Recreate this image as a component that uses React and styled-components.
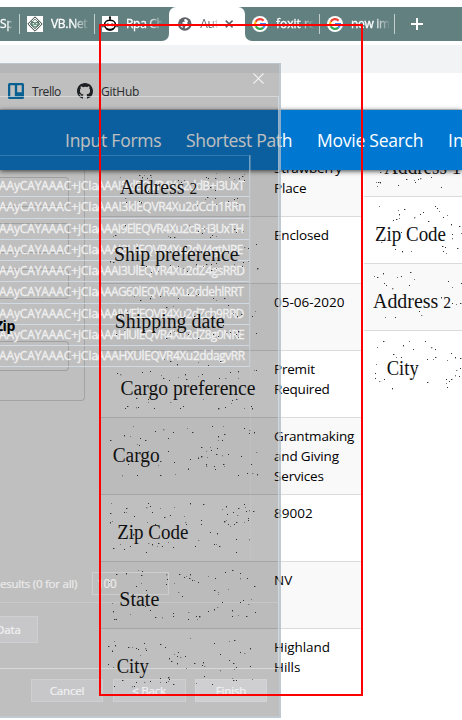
import React from 'react';
import styled, { createGlobalStyle } from 'styled-components';

const Global = createGlobalStyle`
  * { box-sizing: border-box; }
  body { margin: 0; background: #fff; font-family: "Open Sans", "Noto Sans", sans-serif; color: #000; }
`;

const Screen = styled.div`
  position: relative; width: 462px; height: 720px; overflow: hidden;
  display: flex; flex-direction: column; padding-top: 7px; background: #fff;
`;
const TabStrip = styled.div`display: flex; height: 34px; flex: none; overflow: hidden;`;
const TabGroup = styled.div`
  display: flex; background: #638080; width: ${p => p.$w}px; flex: none; overflow: hidden;
  border-radius: ${p => (p.$side === 'left' ? '0 0 7px 0' : '0 0 0 7px')};
`;
const Tab = styled.div`
  display: flex; align-items: center; flex: none; width: ${p => p.$w}px; height: 34px;
  padding-left: ${p => p.$pad ?? 7}px; gap: 8px; position: relative;
  &::after { content: ''; display: ${p => (p.$last ? 'none' : 'block')}; position: absolute; right: 0; top: 7px; width: 1px; height: 20px; background: #c3cece; }
`;
const TabText = styled.span`
  font-size: 12px; line-height: 20px; width: ${p => p.$w}px; overflow: hidden; white-space: nowrap;
  letter-spacing: ${p => p.$ls ?? -0.3}px; color: ${p => (p.$dark ? '#5f6368' : '#fff')};
  -webkit-text-stroke: ${p => (p.$dark ? 0 : 0.3)}px currentColor;
  mask-image: linear-gradient(90deg, #000 60%, transparent 105%);
`;
const ActiveWrap = styled.div`width: 76px; flex: none; background: linear-gradient(#638080 50%, #fff 50%);`;
const ActiveTab = styled.div`
  display: flex; align-items: center; height: 34px; padding-left: 9px; background: #fff; border-radius: 7px 7px 0 0;
`;
const PlusWrap = styled.div`display: flex; align-items: center; padding-left: 15px;`;
const Toolbar = styled.div`height: 28px; margin-top: 4px; background: #f1f3f4; flex: none;`;
const Bookmarks = styled.div`
  display: flex; align-items: center; height: 37px; flex: none; padding-left: 8px; border-bottom: 1px solid #d5dade;
`;
const Bookmark = styled.div`display: flex; align-items: center; gap: 8px; width: 69px; font-size: 12px; color: #2c2f33; letter-spacing: ${p => p.$ls}px;`;
const Nav = styled.nav`
  position: relative; z-index: 1; display: flex; gap: 25px; height: 60px; flex: none; padding-left: 65px;
  background: #0078d2; color: #fff; box-shadow: 0 1px 5px rgba(0,0,0,.75); align-items: center; overflow: visible;
`;
const NavLink = styled.span`font-size: 17.5px; line-height: 24px; white-space: nowrap; width: ${p => p.$w}px; flex: none; letter-spacing: ${p => p.$ls}px;`;
const Content = styled.main`display: flex; align-items: flex-start; height: 550px; overflow: hidden;`;
const FormPane = styled.section`width: 101px; height: 550px; flex: none;`;
const Card = styled.div`width: 85px; height: 231px; border: 1px solid #d9d9d9; border-width: 0 1px 1px 0; border-radius: 0 0 4px 0; padding-top: 7px;`;
const Field = styled.div`
  width: 69px; height: 30px; margin-bottom: ${p => p.$gap}px; border: 1px solid #d3d3d3; border-left: 0; border-radius: 0 4px 4px 0;
`;
const FieldLabel = styled.div`position: relative; z-index: 3; height: 20px; font-size: 14px; line-height: 19px; font-weight: 700; margin: 0 0 5px -5px; letter-spacing: -.5px;`;
const Table = styled.div`flex: none; width: ${p => p.$w}px; margin-top: ${p => p.$shift}px;`;
const Row = styled.div`
  display: flex; height: ${p => p.$h}px; border-top: 1px solid #d9dbdd; background: ${p => (p.$odd ? '#f9f9f9' : '#fff')};
`;
const Picture = styled.svg`flex: none; display: block; position: relative; z-index: 3; margin-top: -1px; width: ${p => p.$w}px; height: 67px;`;
const Value = styled.div`
  padding: 8px 0 0 0; font-size: 13.5px; line-height: 20px; white-space: pre; letter-spacing: ${p => p.$ls}px;
`;

const Dialog = styled.aside`
  position: absolute; z-index: 2; left: 0; top: 63px; width: 281px; height: 655px; overflow: hidden;
  background: rgba(37,37,37,.294); border: 1px solid rgba(190,205,218,.7); border-width: 1px 2px 2px 0;
  color: #ebebeb; font-size: 11.6px; display: flex; flex-direction: column; white-space: nowrap;
  -webkit-text-stroke: .2px currentColor;
`;
const TitleBar = styled.div`height: 32px; flex: none; display: flex; justify-content: flex-end; padding: 9px 15px 0 0;`;
const Body = styled.div`height: 573px; flex: none; border: 1px solid rgba(226,230,234,.62); border-width: 1px 1px 1px 0; padding-top: 58px;`;
const Grid = styled.div`
  width: 251px; height: 406px; border-right: 1px solid rgba(205,205,205,.3);
`;
const GridRows = styled.div`border-right: 1px solid rgba(205,220,233,.55); border-top: 1px solid rgba(205,220,233,.2);`;
const GridRow = styled.div`
  display: flex; height: 21.25px; line-height: 20px; border-bottom: 1px solid rgba(208,221,233,.9); color: #efefef; font-size: 12px;
  -webkit-text-stroke: .35px currentColor;
  &:first-child { height: 20px; border-color: transparent; }
`;
const Prefix = styled.span`width: 98px; flex: none; letter-spacing: -.12px; margin-left: -1px;`;
const Data = styled.span`width: 149px; letter-spacing: ${p => p.$ls}px;`;
const Limit = styled.div`display: flex; align-items: center; height: 42px; border-bottom: 1px solid rgba(220,220,220,.35); padding-top: 3px;`;
const LimitLabel = styled.span`width: 92px; letter-spacing: -.28px;`;
const LimitBox = styled.span`width: 77px; height: 23px; border: 1px solid rgba(220,220,220,.55); padding-left: 4px; line-height: 21px; font-size: 11.8px; letter-spacing: -.3px;`;
const Button = styled.div`
  width: ${p => p.$w}px; height: ${p => p.$h ?? 23}px; flex: none; background: ${p => (p.$hi ? 'rgba(215,215,218,.65)' : 'rgba(208,208,214,.5)')};
  border: 1px solid rgba(220,220,223,.38); display: flex; align-items: center; justify-content: center; color: #f2f2f2; letter-spacing: -.2px;
`;
const ExtractButton = styled(Button)`margin-top: 13px; justify-content: flex-start; border-left: 0; padding-left: 0; text-indent: -4px;`;
const Footer = styled.div`display: flex; padding: 10px 0 0 31px; gap: 9.5px;`;
const Highlight = styled.div`position: absolute; z-index: 4; left: 99px; top: 24px; width: 264px; height: 672px; border: 2px solid #fe0000;`;

/* Each label image: text, x, baseline, width, then speckle offsets in thirds of a pixel. */
const LEFT = [
  { t: 'Address 2', x: 18.7, y: 44.5, w: 77.5, ox: -3, oy: 19, h: 67, v: 'Strawberry\nPlace', ls: -0.15,
    d: '66,28 125,22 132,28 138,22 148,30 158,22 160,28 240,38 250,44 258,38 326,28 330,30 356,16 353,30 395,28 410,34 425,30 432,24 438,18 440,36 86,104 82,92 124,100 130,102 322,94 328,88 352,90 354,110 352,68 336,58 298,112 390,100 408,94 418,108 417,92 150,70' },
  { t: 'Ship preference', x: 13, y: 44.5, w: 124.5, ox: -3, oy: -48, h: 67, v: 'Enclosed', ls: -0.15,
    d: '46,206 52,202 82,172 210,206 218,208 230,208 274,172 302,190 312,196 320,180 338,208 344,202 356,206 410,184 416,194 436,190 38,280 46,282 182,286 218,292 240,296 256,300 268,310 296,290 316,296 324,290 340,290 354,300 356,286 340,306 410,288 432,294 436,282 440,238 452,242 476,230 450,280 478,300 146,296 180,310 160,312 422,262' },
  { t: 'Shipping date', x: 13.7, y: 44.5, w: 110, ox: -3, oy: -115, h: 67, v: '05-06-2020', ls: 0,
    d: '110,384 128,396 156,390 160,384 188,384 206,418 226,416 240,392 270,380 294,382 300,380 346,390 356,396 380,392 392,412 405,436 418,444 430,440 472,430 464,444 54,500 80,488 140,486 170,490 176,482 204,512 216,496 230,490 270,500 300,510 316,478 346,500 362,506 384,494 398,494 414,498 420,508 422,490 474,496 88,430 376,472 290,446' },
  { t: 'Cargo preference', x: 19.5, y: 44.5, w: 135, ox: -11, oy: 20, h: 67, v: 'Premit\nRequired', ls: -0.2,
    d: '224,-31 242,-26 262,-16 324,-22 356,-14 392,-26 492,0 500,2 82,10 92,12 158,6 182,4 214,16 220,26 238,30 266,22 286,14 290,28 326,18 338,14 388,24 406,24 420,8 444,4 446,24 138,84 176,88 176,96 106,116 112,110 138,112 144,112 194,114 242,96 272,114 280,110 340,88 386,114 406,112 424,100 428,90 440,88 462,114 484,108 486,114' },
  { t: 'Cargo', x: 11.7, y: 44.5, w: 47, ox: -11, oy: -47, h: 77, v: 'Grantmaking\nand Giving\nServices', ls: -0.17,
    d: '130,170 60,212 104,196 122,198 150,206 166,210 142,224 148,226 196,184 220,178 250,188 236,206 292,176 308,188 368,170 400,168 384,198 404,194 386,212 396,210 462,176 478,182 478,190 492,186 360,232 334,232 382,236 348,244 364,240 378,252 398,256 414,252 454,260 500,246 236,244 302,268 326,262 334,260 324,266 352,262 254,276 210,274 294,294 296,298 348,284 350,290 374,290 376,298 402,290 400,282 484,284 96,316 142,316 210,316 256,314 446,316 472,310 486,310 502,314 116,282 206,286' },
  { t: 'Zip Code', x: 16.3, y: 44.5, w: 71, ox: -11, oy: -4, h: 67, v: '89002', ls: 0,
    d: '64,40 60,70 60,96 66,94 102,66 108,56 108,68 134,80 176,40 168,52 180,48 188,68 212,54 224,82 240,76 254,52 302,40 340,42 284,80 334,90 334,104 286,96 288,102 410,48 396,58 444,56 464,42 466,52 470,64 490,64 478,62 412,74 430,68 442,76 474,84 474,92 410,90 404,94 414,102 420,110 432,104 440,96 464,96 362,128 382,130 324,152 316,170 374,162 380,164 388,168 438,148 478,148 440,186 70,174 90,164 102,178 120,170 174,160 186,164 168,186 202,168 206,160 218,170 234,156 250,172 130,132 172,98 196,102' },
  { t: 'State', x: 18.3, y: 44.5, w: 40, ox: -101, oy: -1, h: 67, v: 'NV', ls: 0,
    d: '328,66 348,44 380,40 416,32 426,34 424,46 424,70 408,80 440,92 500,44 502,58 498,72 522,70 538,44 552,52 560,50 570,42 568,54 584,60 594,68 578,62 536,96 548,108 340,154 336,130 342,178 350,178 390,164 450,152 466,172 486,172 520,160 520,170 564,158 566,178 590,170 592,178 598,170 436,140 626,48 646,54 644,92 656,104 626,154 644,148 652,142 668,126 676,38 684,88 698,30 720,40 722,54 742,54 764,78 755,117 722,126 730,122 744,134 698,152 698,168 714,166 740,170 766,156 654,98' },
  { t: 'City', x: 15.7, y: 44.5, w: 32, ox: -101, oy: -68, h: 67, v: 'Highland\nHills', ls: -0.07,
    d: '344,244 326,260 346,256 338,272 336,274 384,262 396,262 408,266 414,268 436,264 432,250 440,270 420,286 480,252 496,262 572,236 508,294 514,304 522,284 534,278 532,288 542,292 556,290 532,310 560,324 582,310 326,312 340,322 344,380 366,360 396,378 404,378 410,366 432,366 452,364 480,356 480,368 504,352 508,358 506,364 500,368 520,374 590,370 606,316 610,308 614,318 638,374 644,250 688,244 702,240 660,284 662,330 688,300 700,310 704,328 710,322 720,278 732,280 752,264 750,318 698,356 700,360 710,362 756,358 612,348' },
];
const RIGHT = [
  { t: 'Address 1', x: 20.3, y: 44.5, w: 77, ox: -133, oy: -19, h: 67,
    d: '436,216 442,218 448,216 438,228 502,226 526,208 550,210 554,218 562,208 568,206 600,202 632,232 444,182 448,186' },
  { t: 'Zip Code', x: 11, y: 44.5, w: 71, ox: -133, oy: -86, h: 67,
    d: '446,288 520,298 506,312 502,300 488,332 496,328 506,324 568,312 576,308 550,322 612,290 620,296 626,304 592,334 638,322 648,316 660,344 686,348 690,370 510,366 664,374 450,397 492,419 514,425 540,423 634,409 644,413 646,431 636,425 680,415 664,385' },
  { t: 'Address 2', x: 9, y: 44.5, w: 78, ox: -133, oy: -28, h: 67,
    d: '430,124 440,126 458,114 498,128 510,124 538,112 550,134 460,144 466,152 484,160 534,150 652,140 664,156 690,144 664,206 676,208 632,188 688,204 462,248 492,246 564,228 572,242' },
  { t: 'City', x: 22.7, y: 44.5, w: 32, ox: -133, oy: -95, h: 67,
    d: '438,336 456,320 516,332 536,318 582,320 486,358 496,368 510,366 548,344 600,336 614,344 590,372 606,372 614,366 662,354 650,376 672,366 688,370 436,388 434,414 434,430 444,438 460,434 485,460 540,430 590,442 646,434 646,444 650,456 660,434 674,420 684,424 688,400 676,406 556,396 654,440' },
];

function LabelImage({ item, width }) {
  const twoAt = item.t.endsWith('2');
  return (
    <Picture $w={width}>
      {item.d.split(' ').map((p, i) => {
        const [x, y] = p.split(',').map(Number);
        return <rect key={i} x={Math.round(x / 3 + item.ox - 0.4)} y={Math.round(y / 3 + item.oy - 0.4)} width={i % 4 === 1 ? 1.4 : 1} height={i % 7 === 2 ? 1.4 : 1} fill={i % 3 === 0 ? '#777' : '#333'} />;
      })}
      <text x={item.x} y={item.y} textLength={item.w} lengthAdjust="spacingAndGlyphs" fontFamily='"Liberation Serif", serif' fontSize="20.5" fill="#111">
        {twoAt ? <>Address <tspan fontSize="16">2</tspan></> : item.t}
      </text>
    </Picture>
  );
}

const PREFIX = 'AAyCAYAAAC+jCIa';
const ROWS = [
  ['AAAI5klEQVR4Xu2ddB+i3UxT', -0.6],
  ['AAAI3klEQVR4Xu2dCch1RRn', -0.42],
  ['AAAI9ElEQVR4Xu2cB+i3UxTH', -0.65],
  ['AAAI8UlEQVR4Xu2dV4gtNRE', -0.55],
  ['AAAI3UlEQVR4Xu2dZ4gsRRD', -0.55],
  ['AAAG60lEQVR4Xu2ddehlRRT', -0.6],
  ['AAAIWElEQVR4Xu2dZch9RRD', -0.72],
  ['AAAHlUlEQVR4Xu2dZ8g0NRE', -0.68],
  ['AAAHXUlEQVR4Xu2ddagvRR', -0.45],
];

const Google = () => (
  <svg width="16" height="16" viewBox="0 0 16 16">
    <circle cx="8" cy="8" r="8" fill="#fff" />
    <g fill="none" strokeWidth="2.2">
      <path d="M11.6 4.7A4.9 4.9 0 0 0 3.7 5.7" stroke="#ea4335" />
      <path d="M3.7 5.7A4.9 4.9 0 0 0 3.7 10.3" stroke="#fbbc05" />
      <path d="M3.7 10.3A4.9 4.9 0 0 0 11.3 11.6" stroke="#34a853" />
      <path d="M11.3 11.6A4.6 4.6 0 0 0 12.9 8H8" stroke="#4285f4" />
    </g>
  </svg>
);
const Diamond = () => (
  <svg width="16" height="16" viewBox="0 0 16 16">
    <path fill="#fff" d="M0 0h16v16H0z" />
    <path d="M8 .8 15.2 8 8 15.2.8 8z" fill="#eef3ee" stroke="#34433f" strokeWidth="1" />
    <path d="M8 3 13 8 8 13 3 8z" fill="none" stroke="#7b8a83" />
    <path d="M4.6 5.5 7 6.8h2l2.4-1.3v3.7L8 11.4 4.6 9.2z" fill="#6f9c88" stroke="#24473b" strokeWidth=".6" />
    <path d="M5.7 7.7h1.4M8.9 7.7h1.4M6.5 9.7h3" stroke="#fff" />
  </svg>
);
const Robot = () => (
  <svg width="16" height="16" viewBox="0 0 16 16">
    <path fill="#fff" d="M0 0h16v16H0z" />
    <path d="M8 1.5V4M2.6 8.4C2.6 2.9 13.4 2.9 13.4 8.4C13.4 15.3 2.6 15.3 2.6 8.4z" fill="none" stroke="#000" strokeWidth="1.6" />
    <path d="M.9 8.2v3M15.1 8.2v3M3 9.4h10M4.5 13.2q3.5 1.6 7 0" stroke="#000" strokeWidth="1.3" fill="none" />
    <circle cx="8" cy="1.3" r="1.1" /><circle cx="5.8" cy="8.9" r="1.4" /><circle cx="10.2" cy="8.9" r="1.4" />
  </svg>
);
const Globe = () => (
  <svg width="14" height="14" viewBox="0 0 14 14">
    <circle cx="7" cy="7" r="7" fill="#5f6368" />
    <path d="M7.6 1.8c-2 .3-1.6 1.8-.5 2.1-.3 1.3-2.7.6-2.6 2.2.2 1.4 2.8.2 3.5 1.8.5 1.2-1 1.5-1 3.8 3-.2 5-2.6 4.9-5-.8.8-2 .8-2.3-.3-.4-1 .8-1.3.6-2.6-.4-1-1.3-1.7-2.6-2zM1.9 6.3c0 2.4 1.3 4 3 4.9.4-1.7-.7-2.3-1.1-3.1-.4-.7-1.1-1-1.9-1.8z" fill="#fff" />
  </svg>
);
const Trello = () => (
  <svg width="16" height="16" viewBox="0 0 16 16">
    <rect width="16" height="16" rx="1.5" fill="#0079bf" />
    <path d="M2.3 2.3h4.5v11.1H2.3zM9.2 2.3h4.5v7H9.2z" fill="#fff" />
  </svg>
);
const GitHub = () => (
  <svg width="16" height="16" viewBox="0 0 16 16">
    <path fill="#1b1f23" d="M8 0C3.58 0 0 3.58 0 8c0 3.54 2.29 6.53 5.47 7.59.4.07.55-.17.55-.38v-1.49c-2.01.37-2.53-.49-2.69-.94-.09-.23-.48-.94-.82-1.13-.28-.15-.68-.52-.01-.53.63-.01 1.08.58 1.23.82.72 1.21 1.87.87 2.33.66.07-.52.28-.87.51-1.07-1.78-.2-3.64-.89-3.64-3.95 0-.87.31-1.59.82-2.15-.08-.2-.36-1.02.08-2.12 0 0 .67-.21 2.2.82A7.7 7.7 0 0 1 8 3.86c.68 0 1.36.09 2 .27 1.53-1.04 2.2-.82 2.2-.82.44 1.1.16 1.92.08 2.12.51.56.82 1.27.82 2.15 0 3.07-1.87 3.75-3.65 3.95.29.25.54.73.54 1.48v2.2c0 .21.15.46.55.38A8 8 0 0 0 16 8c0-4.42-3.58-8-8-8z" />
  </svg>
);

export default function App() {
  return (
    <>
      <Global />
      <Screen>
        <TabStrip>
          <TabGroup $w={169} $side="left">
            <Tab $w={20} $pad={-1}><TabText $w={12} $ls={0}>Sp</TabText></Tab>
            <Tab $w={75}><Diamond /><TabText $w={37}>VB.Net</TabText></Tab>
            <Tab $w={74} $last><Robot /><TabText $w={36}>Rpa Ch</TabText></Tab>
          </TabGroup>
          <ActiveWrap>
            <ActiveTab>
              <Globe />
              <svg width="9" height="1" />
              <TabText $w={18} $dark>Aut</TabText>
              <svg width="28" height="10" viewBox="0 0 28 10"><path d="m8 1.5 7 7m0-7-7 7" stroke="#5f6368" strokeWidth="1.6" /></svg>
            </ActiveTab>
          </ActiveWrap>
          <TabGroup $w={217} $side="right">
            <Tab $w={75}><Google /><TabText $w={37} $ls={0}>foxit re</TabText></Tab>
            <Tab $w={75}><Google /><TabText $w={38}>new im</TabText></Tab>
            <PlusWrap>
              <svg width="14" height="14" viewBox="0 0 14 14"><path d="M7 1v12M1 7h12" stroke="#fff" strokeWidth="2" /></svg>
            </PlusWrap>
          </TabGroup>
        </TabStrip>
        <Toolbar />
        <Bookmarks>
          <Bookmark $ls={-0.45}><Trello />Trello</Bookmark>
          <Bookmark $ls={-0.25}><GitHub />GitHub</Bookmark>
        </Bookmarks>
        <Nav>
          <NavLink $w={96} $ls={-0.25}>Input Forms</NavLink>
          <NavLink $w={106} $ls={-0.33}>Shortest Path</NavLink>
          <NavLink $w={106} $ls={-0.25}>Movie Search</NavLink>
          <NavLink $w={20} $ls={0}>In</NavLink>
        </Nav>
        <Content>
          <FormPane>
            <Card>
              <Field $gap={16} /><Field $gap={16} /><Field $gap={17} />
              <FieldLabel>Zip</FieldLabel>
              <Field $gap={0} />
            </Card>
          </FormPane>
          <Table $w={260} $shift={-21}>
            {LEFT.map((r, i) => (
              <Row key={r.v} $h={r.h} $odd={i % 2 === 0}>
                <LabelImage item={r} width={173} />
                <Value $ls={r.ls}>{r.v}</Value>
              </Row>
            ))}
          </Table>
          <svg width="3" height="1" />
          <Table $w={98} $shift={-41}>
            {RIGHT.map((r, i) => (
              <Row key={r.t} $h={r.h} $odd={i % 2 === 0}>
                <LabelImage item={r} width={98} />
              </Row>
            ))}
          </Table>
        </Content>
        <Dialog>
          <TitleBar>
            <svg width="11" height="11" viewBox="0 0 11 11"><path d="m.5.5 10 10m0-10-10 10" stroke="#f2f2f2" strokeWidth="1.1" /></svg>
          </TitleBar>
          <Body>
            <Grid>
              <GridRows>
                <GridRow />
                {ROWS.map(([text, ls]) => (
                  <GridRow key={text}><Prefix>{PREFIX}</Prefix><Data $ls={ls}>{text}</Data></GridRow>
                ))}
              </GridRows>
            </Grid>
            <Limit>
              <LimitLabel>esults (0 for all)</LimitLabel>
              <LimitBox>100</LimitBox>
            </Limit>
            <ExtractButton $w={38} $h={27}>Data</ExtractButton>
          </Body>
          <Footer>
            <Button $w={72}>Cancel</Button>
            <Button $w={73}>&lt; Back</Button>
            <Button $w={72} $hi>Finish</Button>
          </Footer>
        </Dialog>
        <Highlight />
      </Screen>
    </>
  );
}
